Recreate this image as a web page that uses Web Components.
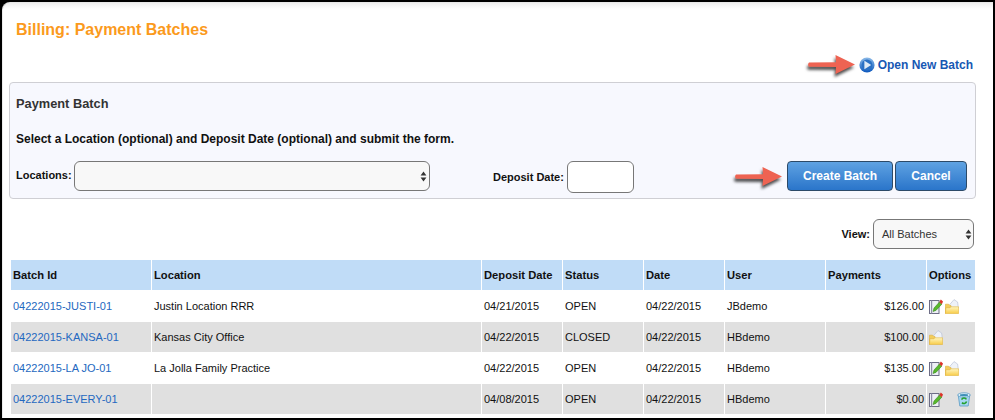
<!DOCTYPE html>
<html>
<head>
<meta charset="utf-8">
<title>Billing: Payment Batches</title>
<style>
  html, body { margin: 0; padding: 0; background: #000; }
  body { width: 995px; height: 420px; overflow: hidden; font-family: "Liberation Sans", Arial, sans-serif; }
</style>
</head>
<body>
<billing-page>
  <page-title>Billing: Payment Batches</page-title>
  <new-batch-link>Open New Batch</new-batch-link>
  <batch-panel></batch-panel>
  <view-filter></view-filter>
  <batch-table>
    <batch-row head>
      <batch-cell>Batch Id</batch-cell><batch-cell>Location</batch-cell><batch-cell>Deposit Date</batch-cell><batch-cell>Status</batch-cell><batch-cell>Date</batch-cell><batch-cell>User</batch-cell><batch-cell>Payments</batch-cell><batch-cell>Options</batch-cell>
    </batch-row>
    <batch-row>
      <batch-cell link>04222015-JUSTI-01</batch-cell><batch-cell>Justin Location RRR</batch-cell><batch-cell>04/21/2015</batch-cell><batch-cell>OPEN</batch-cell><batch-cell>04/22/2015</batch-cell><batch-cell>JBdemo</batch-cell><batch-cell right>$126.00</batch-cell>
      <batch-cell><option-icons><edit-icon></edit-icon><folder-icon></folder-icon></option-icons></batch-cell>
    </batch-row>
    <batch-row alt>
      <batch-cell link>04222015-KANSA-01</batch-cell><batch-cell>Kansas City Office</batch-cell><batch-cell>04/22/2015</batch-cell><batch-cell>CLOSED</batch-cell><batch-cell>04/22/2015</batch-cell><batch-cell>HBdemo</batch-cell><batch-cell right>$100.00</batch-cell>
      <batch-cell><option-icons><folder-icon></folder-icon></option-icons></batch-cell>
    </batch-row>
    <batch-row>
      <batch-cell link>04222015-LA JO-01</batch-cell><batch-cell>La Jolla Family Practice</batch-cell><batch-cell>04/22/2015</batch-cell><batch-cell>OPEN</batch-cell><batch-cell>04/22/2015</batch-cell><batch-cell>HBdemo</batch-cell><batch-cell right>$135.00</batch-cell>
      <batch-cell><option-icons><edit-icon></edit-icon><folder-icon></folder-icon></option-icons></batch-cell>
    </batch-row>
    <batch-row alt>
      <batch-cell link>04222015-EVERY-01</batch-cell><batch-cell></batch-cell><batch-cell>04/08/2015</batch-cell><batch-cell>OPEN</batch-cell><batch-cell>04/22/2015</batch-cell><batch-cell>HBdemo</batch-cell><batch-cell right>$0.00</batch-cell>
      <batch-cell><option-icons wide><edit-icon></edit-icon><bin-icon></bin-icon></option-icons></batch-cell>
    </batch-row>
  </batch-table>
</billing-page>

<script>
const ARROW = `
  <svg class="arrow" width="50" height="26" viewBox="0 0 50 26" aria-hidden="true">
    <path d="M2 10.6 L29 10.2 L28.5 3 L48 12.5 L28.5 22 L29 15 L2 14.8 Q0.2 12.7 2 10.6 Z" fill="#ee6352"/>
  </svg>`

class BillingPage extends HTMLElement {
  constructor() {
    super()
    this.attachShadow({ mode: 'open' })
    this.shadowRoot.innerHTML = `
      <style>
        :host {
          display: block;
          box-sizing: border-box;
          width: 993px;
          height: 418px;
          background: #000;
          padding: 2px 0 0 2px;
        }
        .sheet {
          box-sizing: border-box;
          width: 991px;
          height: 416px;
          background: linear-gradient(#efefef, #fff 6px);
          border-left: 1px solid #ececec;
          border-top: 1px solid #e8e8e8;
          border-radius: 8px 0 0 0;
          padding: 0 0 0 6px;
          display: flex;
          flex-direction: column;
        }
      </style>
      <div class="sheet"><slot></slot></div>
    `
  }
}

class PageTitle extends HTMLElement {
  constructor() {
    super()
    this.attachShadow({ mode: 'open' })
    this.shadowRoot.innerHTML = `
      <style>
        :host {
          display: block;
          margin: 18px 0 0 7px;
          height: 18px;
          color: #fb9a1c;
          font-size: 16px;
          font-weight: bold;
          line-height: 18px;
        }
      </style>
      <slot></slot>
    `
  }
}

class NewBatchLink extends HTMLElement {
  constructor() {
    super()
    this.attachShadow({ mode: 'open' })
    this.shadowRoot.innerHTML = `
      <style>
        :host {
          display: flex;
          justify-content: flex-end;
          align-items: center;
          gap: 3px;
          height: 18px;
          margin: 17px 20px 0 0;
          color: #1658b4;
          font-size: 12px;
          font-weight: bold;
        }
        .wrap { position: relative; width: 16px; height: 16px; }
        .arrow {
          position: absolute;
          left: -52px;
          top: -5px;
          filter: drop-shadow(-1px 3px 1.5px rgba(0,0,0,.7));
        }
        .play { display: block; }
      </style>
      <span class="wrap">
        ${ARROW}
        <svg class="play" width="16" height="16" viewBox="0 0 16 16" aria-hidden="true">
          <defs>
            <linearGradient id="pg" x1="0" y1="0" x2="0" y2="1">
              <stop offset="0" stop-color="#8dbbe8"/><stop offset="1" stop-color="#0b57bd"/>
            </linearGradient>
          </defs>
          <circle cx="8" cy="8" r="7.6" fill="url(#pg)"/>
          <circle cx="8" cy="8" r="5.4" fill="#2a70c4"/>
          <path d="M5.4 3.8 L12.2 8 L5.4 12.2 Z" fill="#dfeaf6"/>
        </svg>
      </span>
      <span><slot></slot></span>
    `
  }
}

class BatchPanel extends HTMLElement {
  constructor() {
    super()
    this.attachShadow({ mode: 'open' })
    this.shadowRoot.innerHTML = `
      <style>
        :host {
          display: block;
          box-sizing: border-box;
          width: 967px;
          height: 117px;
          margin: 8px 0 0 0;
          padding: 14px 8px 0 6px;
          background: #f7f8fe;
          border: 1px solid #cfcfd4;
          border-radius: 4px;
          color: #111;
          font-size: 11px;
          font-weight: bold;
        }
        h2 {
          margin: 0;
          color: #333;
          font-size: 12.8px;
          line-height: 14px;
        }
        p { margin: 21px 0 0; line-height: 14px; font-size: 12px; }
        .row {
          display: flex;
          align-items: flex-start;
          margin-top: 15px;
        }
        label { line-height: 28px; white-space: nowrap; }
        .loc-label { width: 55px; }
        .selectbox, .date {
          box-sizing: border-box;
          border: 1px solid #777;
          border-radius: 6px;
          height: 30px;
        }
        .selectbox {
          width: 356px;
          margin-left: 3px;
          background: #f8f8f8;
          display: flex;
          justify-content: flex-end;
          align-items: center;
          padding-right: 2px;
        }
        .date-label { margin-left: 63px; width: 71px; line-height: 33px; }
        .date { width: 67px; height: 32px; margin-left: 3px; background: #fff; }
        .actions { display: flex; gap: 2px; margin-left: auto; position: relative; }
        .arrow {
          position: absolute;
          left: -53px;
          top: 3px;
          filter: drop-shadow(-1px 3px 1.5px rgba(0,0,0,.7));
        }
        button {
          box-sizing: border-box;
          height: 30px;
          padding: 0;
          border: 1px solid #2c4a68;
          border-radius: 4px;
          background: linear-gradient(#5fa2e2, #2a75ca);
          color: #fff;
          font: bold 12px "Liberation Sans", Arial, sans-serif;
        }
        .create { width: 106px; }
        .cancel { width: 72px; }
      </style>
      <h2>Payment Batch</h2>
      <p>Select a Location (optional) and Deposit Date (optional) and submit the form.</p>
      <div class="row">
        <label class="loc-label">Locations:</label>
        <div class="selectbox"><select-caret></select-caret></div>
        <label class="date-label">Deposit Date:</label>
        <div class="date"></div>
        <div class="actions">
          ${ARROW}
          <button class="create">Create Batch</button>
          <button class="cancel">Cancel</button>
        </div>
      </div>
    `
  }
}

class SelectCaret extends HTMLElement {
  constructor() {
    super()
    this.attachShadow({ mode: 'open' })
    this.shadowRoot.innerHTML = `
      <style>:host { display: block; width: 7px; height: 11px; line-height: 0; }</style>
      <svg width="7" height="11" viewBox="0 0 7 11" aria-hidden="true">
        <path d="M3.5 0.5 L6.4 4.4 H0.6 Z M3.5 10.5 L6.4 6.6 H0.6 Z" fill="#333"/>
      </svg>
    `
  }
}

class ViewFilter extends HTMLElement {
  constructor() {
    super()
    this.attachShadow({ mode: 'open' })
    this.shadowRoot.innerHTML = `
      <style>
        :host {
          display: flex;
          justify-content: flex-end;
          align-items: center;
          gap: 3px;
          width: 965px;
          height: 30px;
          margin-top: 20px;
          font-size: 11px;
        }
        b { color: #111; margin-bottom: 1px; }
        .box {
          box-sizing: border-box;
          width: 101px;
          height: 30px;
          border: 1px solid #777;
          border-radius: 6px;
          background: #f8f8f8;
          display: flex;
          justify-content: space-between;
          align-items: center;
          padding: 0 1px 0 8px;
          color: #333;
          font-size: 11px;
        }
      </style>
      <b>View:</b>
      <div class="box"><span>All Batches</span><select-caret></select-caret></div>
    `
  }
}

class BatchTable extends HTMLElement {
  constructor() {
    super()
    this.attachShadow({ mode: 'open' })
    this.shadowRoot.innerHTML = `
      <style>
        :host {
          display: flex;
          flex-direction: column;
          gap: 1px;
          width: 964px;
          margin: 11px 0 0 2px;
        }
      </style>
      <slot></slot>
    `
  }
}

class BatchRow extends HTMLElement {
  constructor() {
    super()
    this.attachShadow({ mode: 'open' })
    this.shadowRoot.innerHTML = `
      <style>
        :host {
          display: grid;
          grid-template-columns: 140px 329px 80px 80px 80px 100px 100px 48px;
          column-gap: 1px;
          height: 30px;
          color: #111;
        }
        :host([alt]) { --cell-bg: #e0e0e0; }
        :host([head]) { --cell-bg: #c0dcf7; --cell-weight: bold; --cell-size: 11.2px; }
      </style>
      <slot></slot>
    `
  }
}

class BatchCell extends HTMLElement {
  constructor() {
    super()
    this.attachShadow({ mode: 'open' })
    this.shadowRoot.innerHTML = `
      <style>
        :host {
          display: flex;
          align-items: center;
          padding: 0 2px;
          background: var(--cell-bg, #fff);
          font-size: var(--cell-size, 11px);
          font-weight: var(--cell-weight, normal);
          white-space: nowrap;
          overflow: hidden;
        }
        :host([link]) { color: #2468c0; }
        :host([right]) { justify-content: flex-end; }
      </style>
      <slot></slot>
    `
  }
}

class OptionIcons extends HTMLElement {
  constructor() {
    super()
    this.attachShadow({ mode: 'open' })
    this.shadowRoot.innerHTML = `
      <style>
        :host { display: flex; align-items: center; gap: 2px; }
        :host([wide]) { gap: 14px; }
      </style>
      <slot></slot>
    `
  }
}

class EditIcon extends HTMLElement {
  constructor() {
    super()
    this.attachShadow({ mode: 'open' })
    this.shadowRoot.innerHTML = `
      <style>:host { display: block; width: 14px; height: 15px; line-height: 0; }</style>
      <svg width="14" height="15" viewBox="0 0 14 15" aria-hidden="true">
        <rect x="0.5" y="1.5" width="9.5" height="13" fill="#eef0f6" stroke="#6d6d86"/>
        <path d="M2.6 1.5 V14.5" stroke="#8f8fa8" stroke-width="1.2"/>
        <path d="M4 12.5 L5 9 L10.5 3 L12.8 5.2 L7 11.4 Z" fill="#58b82c" stroke="#2f7d18" stroke-width=".5"/>
        <path d="M10.4 3 L11.8 0.6 L14 2.6 L12.8 5.2 Z" fill="#dc3328"/>
      </svg>
    `
  }
}

class FolderIcon extends HTMLElement {
  constructor() {
    super()
    this.attachShadow({ mode: 'open' })
    this.shadowRoot.innerHTML = `
      <style>:host { display: block; width: 14px; height: 15px; line-height: 0; }</style>
      <svg width="14" height="15" viewBox="0 0 14 15" aria-hidden="true">
        <defs>
          <linearGradient id="fg" x1="0" y1="0" x2="0" y2="1">
            <stop offset="0" stop-color="#fff6c0"/><stop offset="1" stop-color="#f8cc48"/>
          </linearGradient>
        </defs>
        <path d="M3.5 7 L9 0.6 L12.6 3 L13.4 9 H3.5 Z" fill="#eef2f9" stroke="#b2bbd0" stroke-width=".6"/>
        <path d="M0.5 14.5 V5.2 H3.6 L5 6.6 H6 V9 H0.5 Z" fill="#f3cd5a" stroke="#dcb040" stroke-width=".6"/>
        <path d="M0.5 14.5 L0.9 8.8 L5 8.8 L6 7.8 H13.6 V14.5 Z" fill="url(#fg)" stroke="#e2b63e" stroke-width=".6"/>
      </svg>
    `
  }
}

class BinIcon extends HTMLElement {
  constructor() {
    super()
    this.attachShadow({ mode: 'open' })
    this.shadowRoot.innerHTML = `
      <style>:host { display: block; width: 14px; height: 15px; line-height: 0; }</style>
      <svg width="14" height="15" viewBox="0 0 14 15" aria-hidden="true">
        <path d="M1.2 3 L2.8 14 H11.2 L12.8 3 Z" fill="#a6d8f2" stroke="#5a9ac4" stroke-width=".8"/>
        <ellipse cx="7" cy="3" rx="6.3" ry="2.2" fill="#e2f3fb" stroke="#5a9ac4" stroke-width=".8"/>
        <ellipse cx="7" cy="3.2" rx="4.2" ry="1.1" fill="#3f8fb8"/>
        <path d="M4.6 7.6 A2.7 2.7 0 0 1 9.4 7.4 M9.6 9.6 A2.7 2.7 0 0 1 5 10.6" fill="none" stroke="#25a02c" stroke-width="1.6"/>
      </svg>
    `
  }
}

customElements.define('billing-page', BillingPage)
customElements.define('page-title', PageTitle)
customElements.define('new-batch-link', NewBatchLink)
customElements.define('batch-panel', BatchPanel)
customElements.define('select-caret', SelectCaret)
customElements.define('view-filter', ViewFilter)
customElements.define('batch-table', BatchTable)
customElements.define('batch-row', BatchRow)
customElements.define('batch-cell', BatchCell)
customElements.define('option-icons', OptionIcons)
customElements.define('edit-icon', EditIcon)
customElements.define('folder-icon', FolderIcon)
customElements.define('bin-icon', BinIcon)
</script>
</body>
</html>
